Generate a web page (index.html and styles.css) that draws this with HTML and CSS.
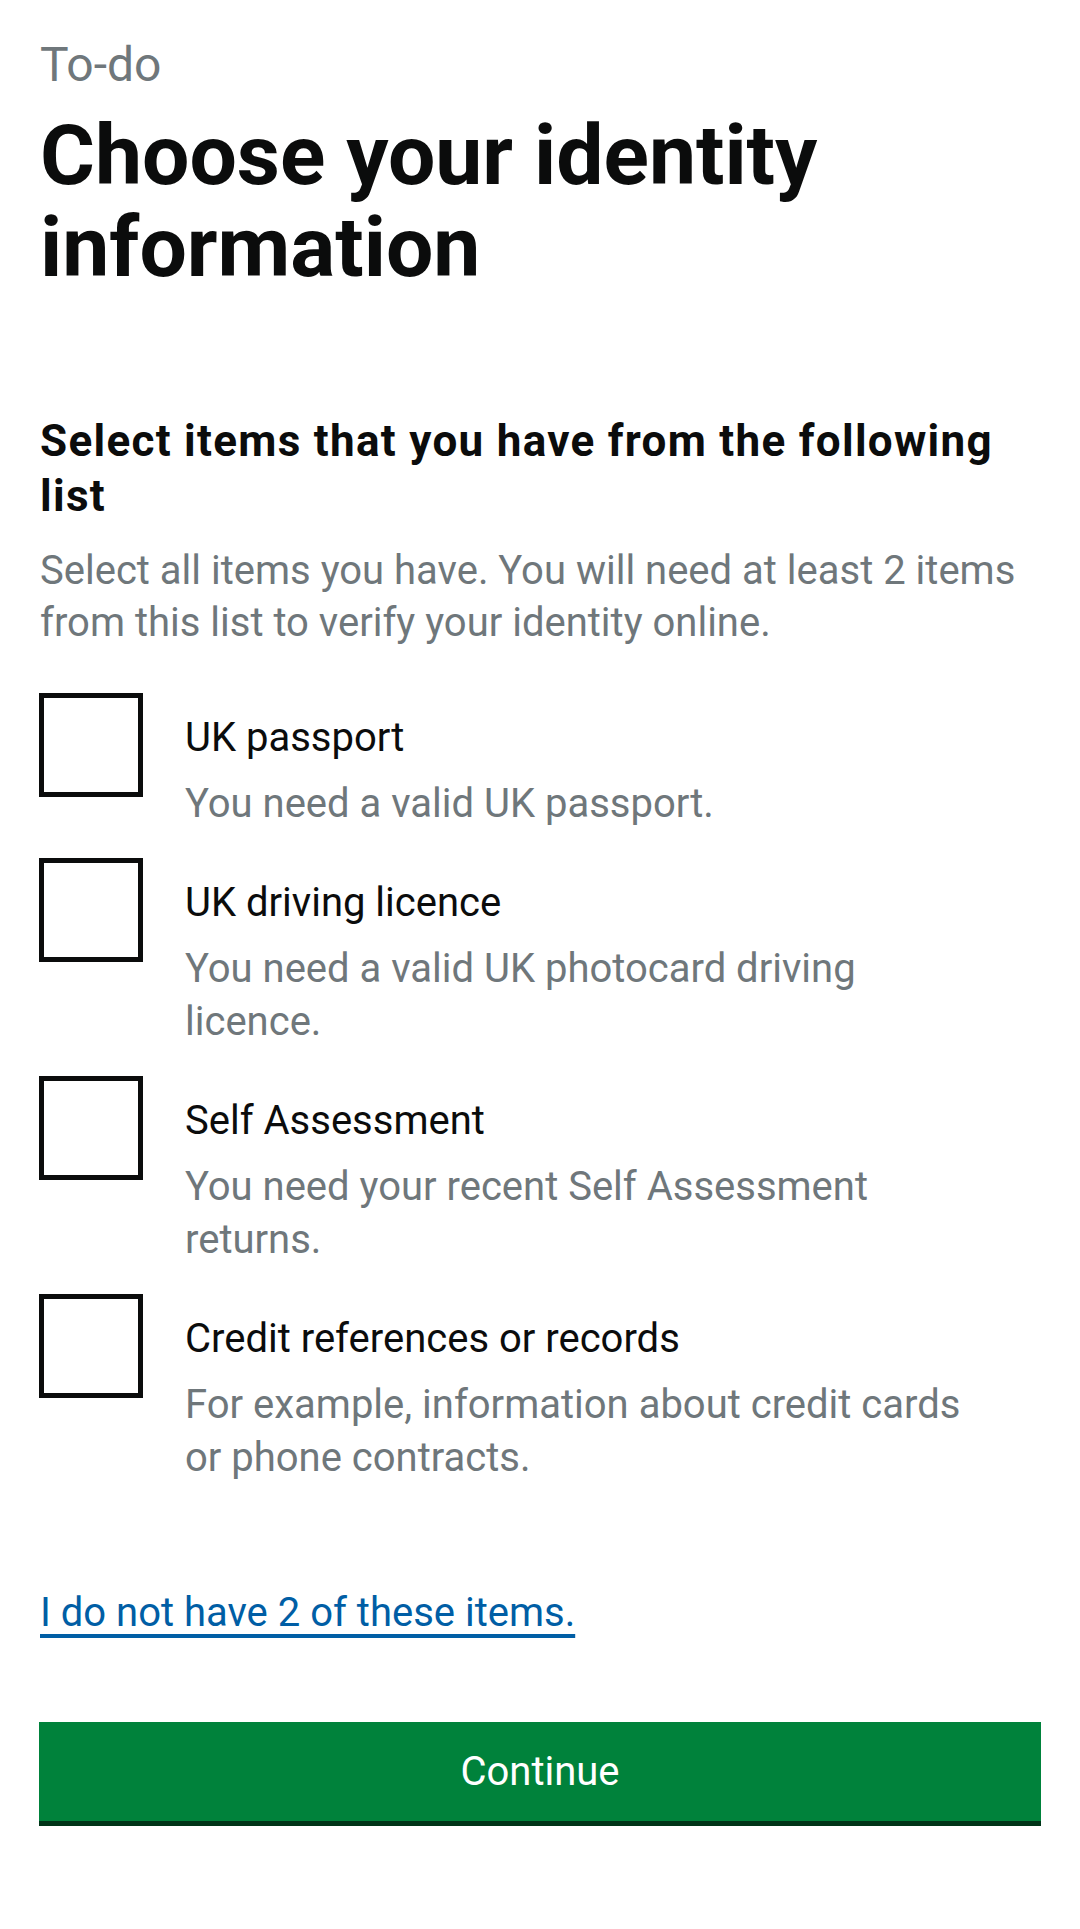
FILE: index.html
```html
<!DOCTYPE html>
<html lang="en">
<head>
    <meta charset="UTF-8">
    <meta name="viewport" content="width=device-width, initial-scale=1.0">
    <title>Choose your identity information</title>
    <link rel="stylesheet" href="styles.css">
</head>
<body>
    <div class="container">
        <div class="caption">To-do</div>
        <h1>Choose your identity information</h1>

        <h2>Select items that you have from the following list</h2>
        <p class="intro">Select all items you have. You will need at least 2 items from this list to verify your identity online.</p>

        <div class="options">
            <label class="option">
                <span class="box"></span>
                <span class="option-text">
                    <span class="option-label">UK passport</span>
                    <span class="option-hint">You need a valid UK passport.</span>
                </span>
            </label>
            <label class="option">
                <span class="box"></span>
                <span class="option-text">
                    <span class="option-label">UK driving licence</span>
                    <span class="option-hint">You need a valid UK photocard driving licence.</span>
                </span>
            </label>
            <label class="option">
                <span class="box"></span>
                <span class="option-text">
                    <span class="option-label">Self Assessment</span>
                    <span class="option-hint">You need your recent Self Assessment returns.</span>
                </span>
            </label>
            <label class="option">
                <span class="box"></span>
                <span class="option-text">
                    <span class="option-label">Credit references or records</span>
                    <span class="option-hint">For example, information about credit cards or phone contracts.</span>
                </span>
            </label>
        </div>

        <a href="#" class="no-items">I do not have 2 of these items.</a>

        <button class="continue">Continue</button>
    </div>
</body>
</html>
```

FILE: styles.css
```css
body {
    font-family: Roboto, "Noto Sans", sans-serif;
    background: #ffffff;
    color: #0b0c0c;
    margin: 0;
}

.container {
    padding: 35px 39px 0 40px;
}

.caption {
    font-size: 48px;
    line-height: 60px;
    color: #6f777b;
}

h1 {
    font-size: 84px;
    line-height: 92px;
    font-weight: 700;
    margin: 15px 0 0;
}

h2 {
    font-size: 44px;
    line-height: 55px;
    font-weight: 700;
    letter-spacing: 1.3px;
    margin: 120px 0 0;
}

.intro {
    font-size: 40px;
    line-height: 52px;
    color: #6f777b;
    margin: 21px 0 0;
}

.options {
    display: flex;
    flex-direction: column;
    gap: 28px;
    margin-top: 44px;
}

.option {
    display: flex;
    align-items: flex-start;
}

.box {
    flex: none;
    width: 104px;
    height: 104px;
    box-sizing: border-box;
    border: 5px solid #0b0c0c;
    margin-left: -1px;
}

.option-text {
    display: flex;
    flex-direction: column;
    padding: 19px 60px 0 42px;
}

.option-label {
    font-size: 40px;
    line-height: 52px;
}

.option-hint {
    font-size: 40px;
    line-height: 53px;
    color: #6f777b;
    margin-top: 13px;
}

.no-items {
    display: block;
    width: max-content;
    margin-top: 103px;
    font-size: 40px;
    line-height: 52px;
    color: #005ea5;
    text-decoration: underline;
    text-decoration-thickness: 4px;
    text-underline-offset: 8px;
}

.continue {
    display: block;
    width: calc(100% + 1px);
    height: 104px;
    margin: 83px 0 0 -1px;
    padding: 0;
    background-color: #00823b;
    border: none;
    border-bottom: 5px solid #003418;
    border-radius: 0;
    color: white;
    font-family: Roboto, "Noto Sans", sans-serif;
    font-size: 40px;
    cursor: pointer;
}
```
